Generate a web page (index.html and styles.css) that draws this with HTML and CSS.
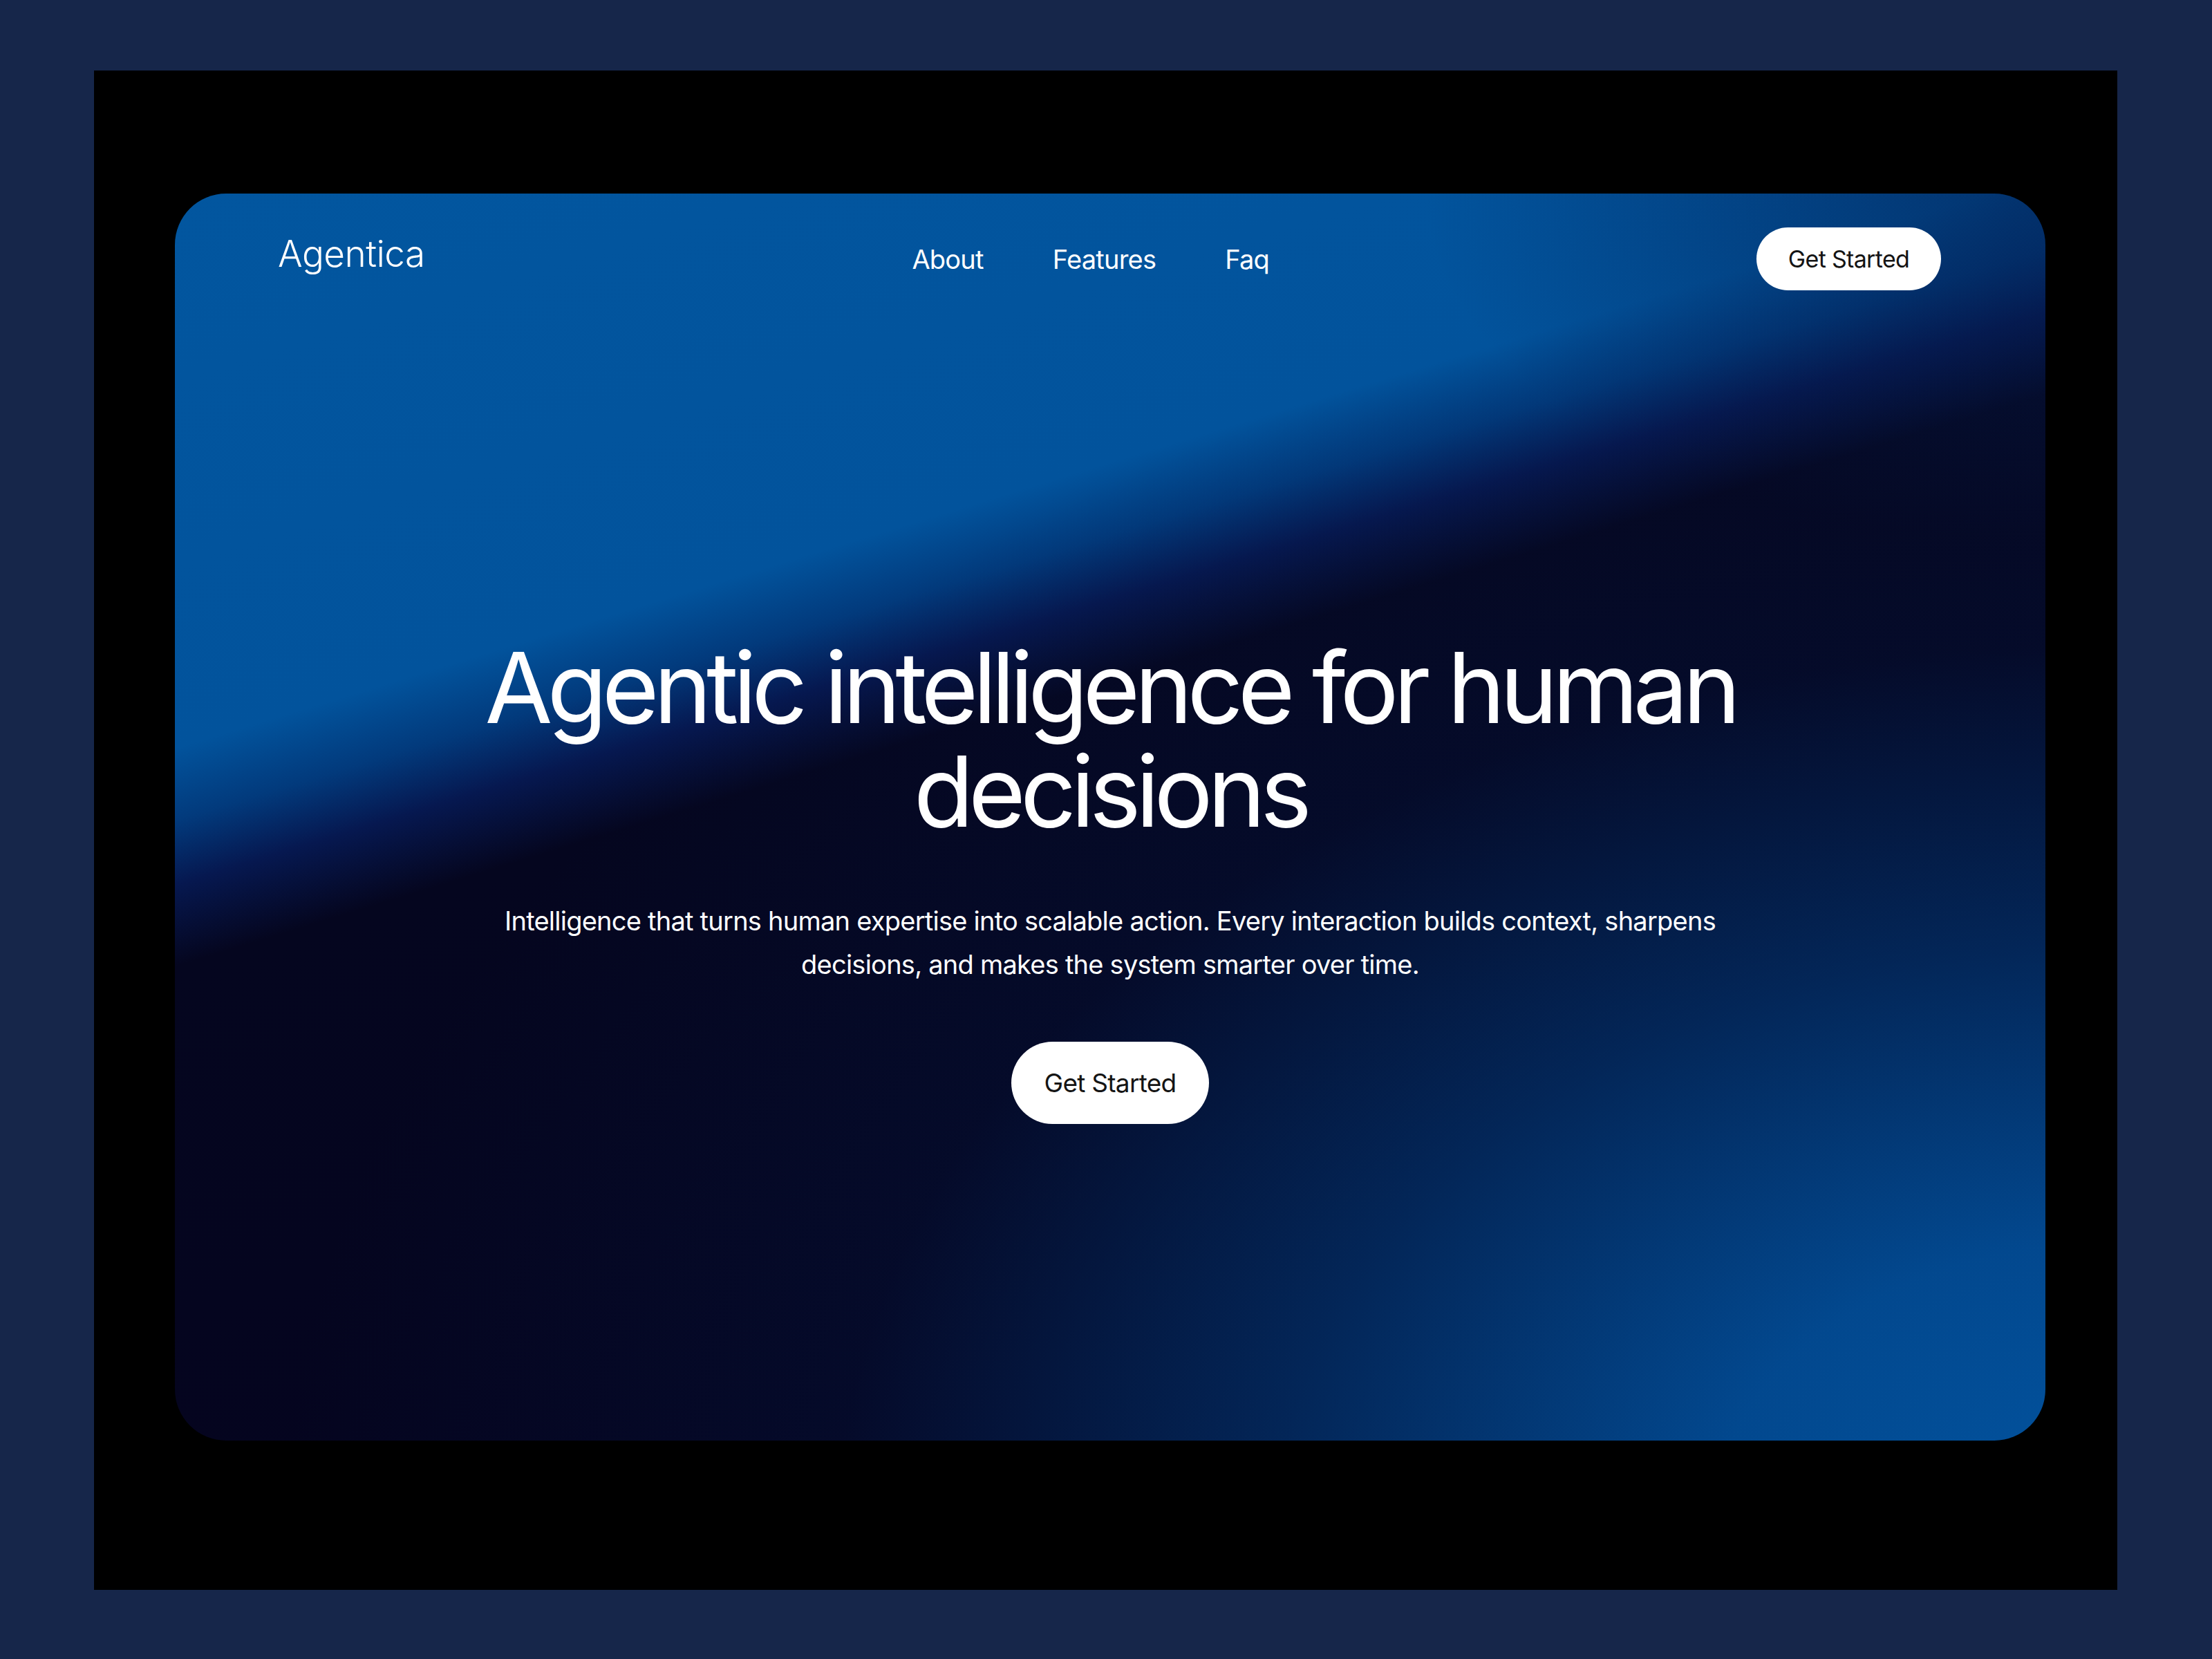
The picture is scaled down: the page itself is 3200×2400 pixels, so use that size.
FILE: index.html
```html
<!DOCTYPE html>
<html lang="en">
<head>
<meta charset="utf-8">
<title>Agentica</title>
<link rel="stylesheet" href="styles.css">
</head>
<body>
<div class="page">
  <div class="frame">
    <section class="card">
      <header class="nav">
        <div class="logo">Agentica</div>
        <nav class="links">
          <a href="#">About</a>
          <a href="#">Features</a>
          <a href="#">Faq</a>
        </nav>
        <a class="btn btn-nav" href="#">Get Started</a>
      </header>
      <div class="hero">
        <h1 class="title"><span class="line">Agentic intelligence for human</span><span class="line">decisions</span></h1>
        <p class="lead">Intelligence that turns human expertise into scalable action. Every interaction builds context, sharpens<br>decisions, and makes the system smarter over time.</p>
        <a class="btn btn-hero" href="#">Get Started</a>
      </div>
    </section>
  </div>
</div>
</body>
</html>
```

FILE: styles.css
```css
* { box-sizing: border-box; }
html, body { margin: 0; padding: 0; }
body {
  background: #16264a;
  font-family: Inter, "Noto Sans", sans-serif;
  color: #fff;
}
.page {
  width: 3200px;
  height: 2400px;
  padding: 102px 137px 100px 136px;
}
.frame {
  height: 2198px;
  background: #000;
  padding: 178px 104px 216px 117px;
}
.card {
  height: 1804px;
  border-radius: 74px;
  overflow: hidden;
  display: flex;
  flex-direction: column;
  background:
    radial-gradient(ellipse 2650px 1800px at 104% 106%, rgba(2,84,160,1) 0%, rgba(2,78,152,0.92) 22%, rgba(2,56,118,0.65) 46%, rgba(4,24,66,0.3) 70%, rgba(5,4,31,0) 100%),
    radial-gradient(ellipse 900px 500px at 100% 0%, rgba(3,30,80,0.6) 0%, rgba(3,30,80,0) 100%),
    linear-gradient(163deg, #02569f 0%, #02539c 30.5%, #023a7c 34.5%, #061850 38%, #05061f 42.5%, #05031f 100%);
}
.nav {
  display: flex;
  align-items: center;
  justify-content: space-between;
  padding: 49px 151px 0 149px;
}
.logo {
  font-size: 53px;
  font-weight: 300;
  letter-spacing: -0.01em;
  line-height: 1;
  margin-top: -14px;
}
.links {
  display: flex;
  gap: 100px;
}
.links a {
  color: #fff;
  text-decoration: none;
  font-size: 38px;
  font-weight: 400;
  letter-spacing: -0.02em;
}
.btn {
  display: inline-flex;
  align-items: center;
  justify-content: center;
  background: #fff;
  color: #141414;
  text-decoration: none;
  border-radius: 999px;
  font-weight: 400;
  letter-spacing: -0.02em;
}
.btn-nav {
  width: 267px;
  height: 91px;
  font-size: 34px;
}
.hero {
  display: flex;
  flex-direction: column;
  align-items: center;
  text-align: center;
  padding-top: 499px;
}
.title {
  margin: 0;
  font-size: 142px;
  line-height: 150px;
  font-weight: 400;
  letter-spacing: -0.055em;
  display: flex;
  flex-direction: column;
  align-items: center;
}
.title .line {
  display: block;
}
.lead {
  margin: 82px 0 0;
  font-size: 38px;
  line-height: 63px;
  font-weight: 400;
  letter-spacing: -0.02em;
}
.btn-hero {
  margin-top: 80px;
  width: 286px;
  height: 119px;
  font-size: 37px;
}
```
